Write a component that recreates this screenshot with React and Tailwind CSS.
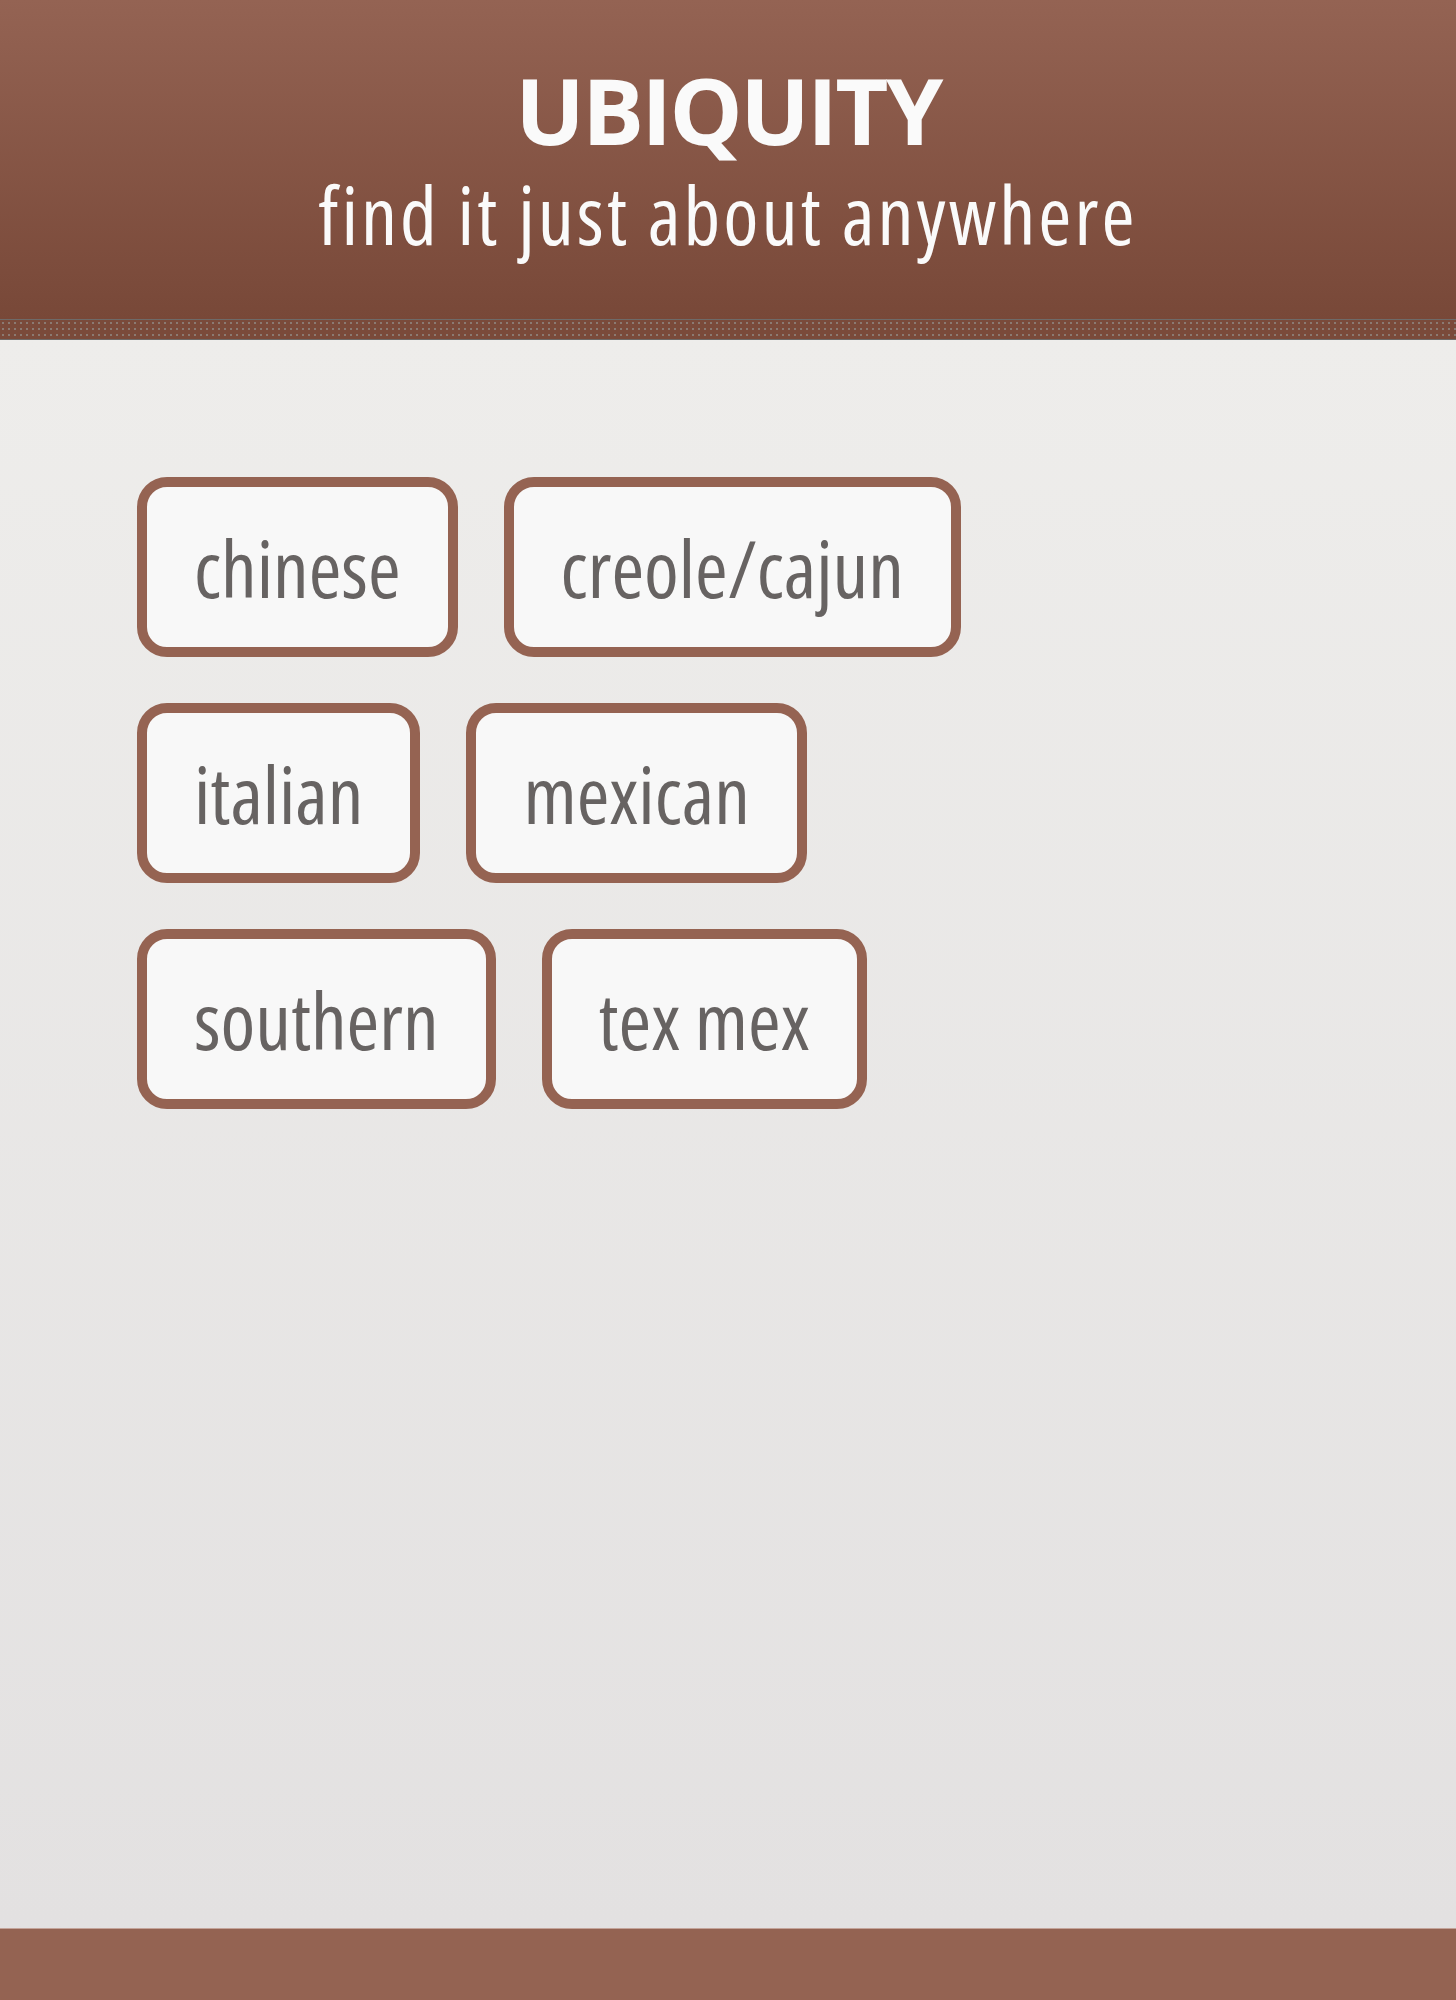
const rows = [
  ["chinese", "creole/cajun"],
  ["italian", "mexican"],
  ["southern", "tex mex"],
];

function Tag({ label }) {
  return (
    <button className="h-[180px] px-[47px] flex items-center border-[10px] border-[#956352] rounded-[30px] bg-[#f8f8f8] text-[#676362] text-[79px] leading-none [font-stretch:75%] font-normal">
      {label}
    </button>
  );
}

export default function App() {
  return (
    <div className="min-h-[2000px] flex flex-col font-['Open_Sans',sans-serif]">
      <header className="h-[319px] bg-gradient-to-b from-[#946353] to-[#784838] flex flex-col items-center text-[#fafafa]">
        <h1 className="mt-[64px] text-[92px] leading-none font-bold tracking-[-2.5px] [font-stretch:93%]">UBIQUITY</h1>
        <p className="mt-[18px] text-[80px] leading-none font-normal tracking-[3px] [font-stretch:75%]">find it just about anywhere</p>
      </header>
      <div className="h-[21px] border-y border-[#6e6a68] bg-[#7a4a3a] bg-[radial-gradient(#8b7a72_1px,transparent_1.2px)] bg-[size:6px_6px]"></div>
      <main className="flex-1 bg-gradient-to-b from-[#eeedeb] to-[#e3e1e1] pl-[137px] pt-[137px] flex flex-col gap-[46px]">
        {rows.map((r, i) => (
          <div key={i} className="flex gap-[46px]">
            {r.map((l) => (
              <Tag key={l} label={l} />
            ))}
          </div>
        ))}
      </main>
      <footer className="h-[72px] bg-[#946352] border-t border-[#c4a49a]"></footer>
    </div>
  );
}
